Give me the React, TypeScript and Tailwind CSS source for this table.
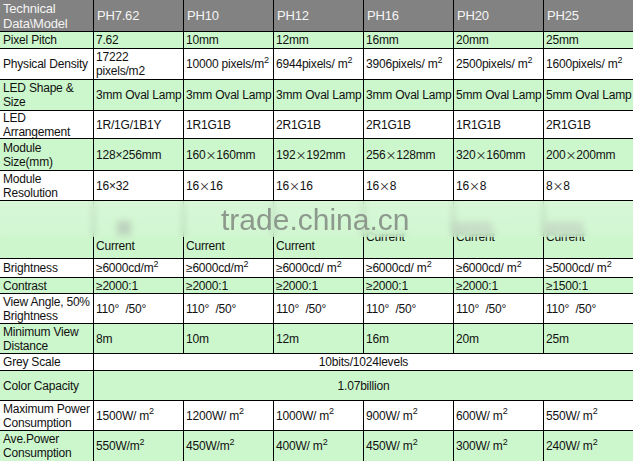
import React from 'react';

type Cell = React.ReactNode;

interface Row {
  label: Cell;
  cells: Cell[];
  green: boolean;
  span?: boolean;
}

const M2 = () => (
  <>
    m<sup>2</sup>
  </>
);

// wide "×" as it shows in the sheet
const X = () => <span className="font-['Noto_Sans_CJK_SC',sans-serif] text-[11px]">×</span>;

const rows: Row[] = [
  { label: 'Pixel Pitch', cells: ['7.62', '10mm', '12mm', '16mm', '20mm', '25mm'], green: true },
  {
    label: 'Physical Density',
    cells: [
      <>17222<br />pixels/m2</>,
      <>10000 pixels/<M2 /></>,
      <>6944pixels/ <M2 /></>,
      <>3906pixels/ <M2 /></>,
      <>2500pixels/ <M2 /></>,
      <>1600pixels/ <M2 /></>,
    ],
    green: false,
  },
  {
    label: <>LED Shape &amp;<br />Size</>,
    cells: ['3mm Oval Lamp', '3mm Oval Lamp', '3mm Oval Lamp', '3mm Oval Lamp', '5mm Oval Lamp', '5mm Oval Lamp'],
    green: true,
  },
  {
    label: <>LED<br />Arrangement</>,
    cells: ['1R/1G/1B1Y', '1R1G1B', '2R1G1B', '2R1G1B', '1R1G1B', '2R1G1B'],
    green: false,
  },
  {
    label: <>Module<br />Size(mm)</>,
    cells: [
      '128×256mm',
      <>160<X />160mm</>,
      <>192<X />192mm</>,
      <>256<X />128mm</>,
      <>320<X />160mm</>,
      <>200<X />200mm</>,
    ],
    green: true,
  },
  {
    label: <>Module<br />Resolution</>,
    cells: ['16×32', <>16<X />16</>, <>16<X />16</>, <>16<X />8</>, <>16<X />8</>, <>8<X />8</>],
    green: false,
  },
];

const rowsAfter: Row[] = [
  {
    label: 'Brightness',
    cells: [
      <>≥6000cd/<M2 /></>,
      <>≥6000cd/<M2 /></>,
      <>≥6000cd/ <M2 /></>,
      <>≥6000cd/ <M2 /></>,
      <>≥6000cd/ <M2 /></>,
      <>≥5000cd/ <M2 /></>,
    ],
    green: false,
  },
  { label: 'Contrast', cells: ['≥2000:1', '≥2000:1', '≥2000:1', '≥2000:1', '≥2000:1', '≥1500:1'], green: true },
  {
    label: <>View Angle, 50%<br />Brightness</>,
    cells: Array(6).fill('110°\u00a0\u00a0/50°'),
    green: false,
  },
  {
    label: <>Minimum View<br />Distance</>,
    cells: ['8m', '10m', '12m', '16m', '20m', '25m'],
    green: true,
  },
  { label: 'Grey Scale', cells: ['10bits/1024levels'], green: false, span: true },
  { label: 'Color Capacity', cells: ['1.07billion'], green: true, span: true },
  {
    label: <>Maximum Power<br />Consumption</>,
    cells: [
      <>1500W/ <M2 /></>,
      <>1200W/ <M2 /></>,
      <>1000W/ <M2 /></>,
      <>900W/ <M2 /></>,
      <>600W/ <M2 /></>,
      <>550W/ <M2 /></>,
    ],
    green: false,
  },
  {
    label: <>Ave.Power<br />Consumption</>,
    cells: [
      <>550W/<M2 /></>,
      <>450W/<M2 /></>,
      <>400W/ <M2 /></>,
      <>450W/ <M2 /></>,
      <>300W/ <M2 /></>,
      <>240W/ <M2 /></>,
    ],
    green: true,
  },
];

function DataRow({ row }: { row: Row }) {
  const bg = row.green ? 'bg-[#ccf7cc]' : 'bg-white';
  return (
    <>
      <div className={`${bg} flex items-center pl-[3px] whitespace-nowrap`}>{row.label}</div>
      {row.span ? (
        <div className={`${bg} col-span-6 flex items-center justify-center whitespace-nowrap`}>{row.cells[0]}</div>
      ) : (
        row.cells.map((c, i) => (
          <div key={i} className={`${bg} flex items-center pl-[2px] whitespace-nowrap`}>
            {c}
          </div>
        ))
      )}
    </>
  );
}

export default function App() {
  const headers = ['PH7.62', 'PH10', 'PH12', 'PH16', 'PH20', 'PH25'];

  return (
    <div className="relative w-[633px] h-[461px] overflow-hidden font-['Liberation_Sans',Arial,sans-serif] text-[12px] leading-[14px] tracking-[-0.2px] text-[#111]">
      <div className="grid grid-cols-[93px_repeat(6,89px)] grid-rows-[31px_16px_30px_30px_27px_31px_29px_57px_18px_15px_29px_29px_16px_29px_29px_30px] gap-px bg-black">
        {/* header */}
        <div className="bg-[#828282] text-[#f4f4f4] flex items-center pl-[3px] text-[13px] leading-[15px]">
          Technical
          <br />
          Data\Model
        </div>
        {headers.map((h) => (
          <div key={h} className="bg-[#828282] text-[#f4f4f4] flex items-center pl-[3px] text-[13px]">
            {h}
          </div>
        ))}

        {rows.map((r, i) => (
          <DataRow key={i} row={r} />
        ))}

        {/* watermark row */}
        <div className="bg-[#cdf6cd]" />
        {[0, 1, 2].map((i) => (
          <div key={i} className="bg-[#cdf6cd] flex items-end pl-[2px] pb-[5px]">
            Current
          </div>
        ))}
        {[3, 4, 5].map((i) => (
          <div key={i} className="bg-[#cdf6cd] flex items-end pl-[2px] pb-[14px]">
            Current
          </div>
        ))}

        {rowsAfter.map((r, i) => (
          <DataRow key={i} row={r} />
        ))}
      </div>

      {/* blurred band over the watermark row */}
      <div className="absolute left-0 right-0 top-[201px] h-[36px] backdrop-blur-[3px] bg-gradient-to-b from-[#dcf8dc]/70 to-[#d2f6d2]/60" />
      <div className="absolute top-[221px] left-[117px] w-[14px] h-[14px] bg-[#b0b9b0] blur-[3px] opacity-60" />
      <div className="absolute top-[222px] left-[452px] w-[40px] h-[12px] bg-[#bcc5bc] blur-[3px] opacity-50" />
      <div className="absolute top-[222px] left-[545px] w-[38px] h-[12px] bg-[#bcc5bc] blur-[3px] opacity-50" />
      <div className="absolute top-[206px] left-[221px] text-[30px] leading-[28px] tracking-normal text-[#8d998d] font-['Liberation_Sans',Arial,sans-serif]">
        trade.china.cn
      </div>
    </div>
  );
}
